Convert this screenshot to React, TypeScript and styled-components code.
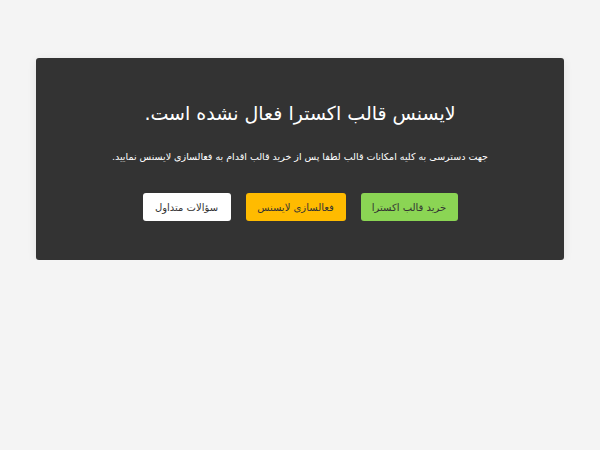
import React from "react";
import styled, { createGlobalStyle } from "styled-components";

const GlobalStyle = createGlobalStyle`
  html, body {
    margin: 0;
    padding: 0;
    background: #f4f4f4;
    font-family: "DejaVu Sans", "Noto Sans", sans-serif;
  }
`;

const Page = styled.div`
  padding: 58px 36px 0;
  direction: rtl;
`;

const Card = styled.div`
  background: #333333;
  border-radius: 3px;
  box-shadow: 0 2px 10px rgba(0, 0, 0, 0.08);
  height: 202px;
  box-sizing: border-box;
  padding-top: 40px;
  display: flex;
  flex-direction: column;
  align-items: center;
`;

const Title = styled.h1`
  margin: 0;
  color: #ffffff;
  font-size: 19px;
  font-weight: normal;
  line-height: 30px;
`;

const Lead = styled.p`
  margin: 19px 0 0;
  color: #ffffff;
  font-size: 9.5px;
  line-height: 20px;
`;

const Actions = styled.div`
  display: flex;
  gap: 15px;
  margin-top: 26px;
`;

const Button = styled.a<{ $bg: string; $width: number }>`
  display: flex;
  align-items: center;
  justify-content: center;
  width: ${(p) => p.$width}px;
  height: 28px;
  background: ${(p) => p.$bg};
  color: #333333;
  border-radius: 3px;
  font-size: 10px;
  text-decoration: none;
  cursor: pointer;
`;

export default function App() {
  return (
    <>
      <GlobalStyle />
      <Page>
        <Card>
          <Title>لایسنس قالب اکسترا فعال نشده است.</Title>
          <Lead>
            جهت دسترسی به کلیه امکانات قالب لطفا پس از خرید قالب اقدام به فعالسازی لایسنس نمایید.
          </Lead>
          <Actions>
            <Button $bg="#8bd554" $width={97}>خرید قالب اکسترا</Button>
            <Button $bg="#ffbb00" $width={100}>فعالسازی لایسنس</Button>
            <Button $bg="#ffffff" $width={88}>سؤالات متداول</Button>
          </Actions>
        </Card>
      </Page>
    </>
  );
}
